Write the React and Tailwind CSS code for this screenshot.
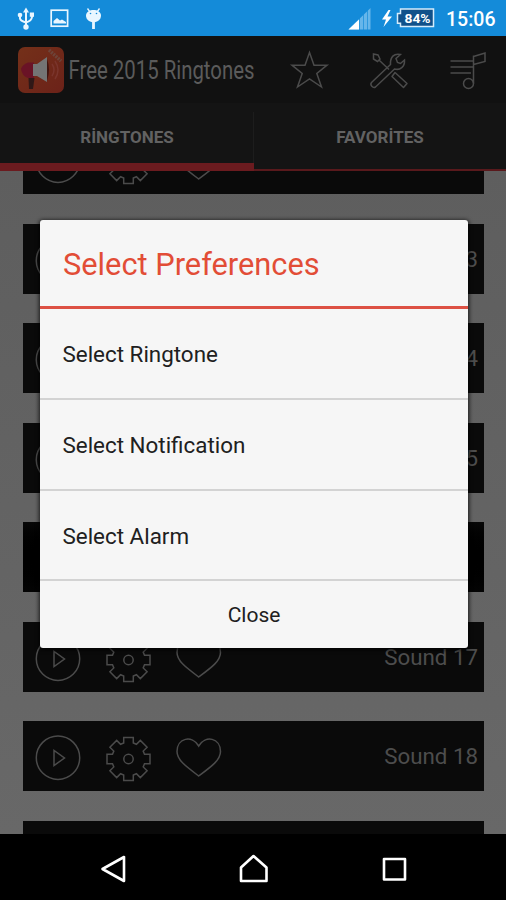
const sounds = [12, 13, 14, 15, 16, 17, 18, 19];
const unlabelled = [12, 19];
const options = ['Select Ringtone', 'Select Notification', 'Select Alarm'];

const StatusBar = () => (
  <div className="flex h-9 shrink-0 items-center bg-[#148bd9] text-white">
    <svg width="110" height="36" viewBox="0 0 110 36" fill="none" stroke="#e9f6ff">
      <path d="M26 11V27M20 15V18.5Q20.5 21 26 22.5Q31.5 21 32 17V14" strokeWidth="2" />
      <path d="M26 7.5L29 12.500H23Z" fill="#e9f6ff" stroke="none" />
      <circle cx="20" cy="15" r="2.300" fill="#e9f6ff" stroke="none" />
      <path d="M29.800 12.5H34V16.800H29.800Z" fill="#e9f6ff" stroke="none" />
      <circle cx="26" cy="27" r="2.700" fill="#e9f6ff" stroke="none" />
      <rect x="51.2" y="10.2" width="16.4" height="16" strokeWidth="1.7" />
      <path d="M53.5 23.5V21L57 18L60 20.5L62 19.500L66 22V23.5Z" fill="#e9f6ff" stroke="none" />
      <path d="M86 15.500C86 8 101 8 101 15.500C101 24.500 86 24.500 86 15.500Z" fill="#e9f6ff" stroke="none" />
      <path d="M87.500 8.500L90 12M99.500 8.500L97 12" strokeWidth="1.300" />
      <path d="M93.500 21V29" strokeWidth="2.800" />
      <circle cx="90.500" cy="13.500" r="0.800" fill="#148bd9" stroke="none" />
      <circle cx="96.500" cy="13.500" r="0.800" fill="#148bd9" stroke="none" />
    </svg>
    <svg className="ml-auto" width="98" height="36" viewBox="346 0 98 36">
      <path d="M348.500 29.500L370.500 8V29.500Z" fill="#66b6ea" />
      <path d="M348.500 29.500L359 19.500V29.500Z" fill="#fff" />
      <path d="M359.500 18V30M363.500 14V30M367.500 10V30" stroke="#148bd9" strokeWidth="0.700" />
      <path d="M388.500 10L382 19.500H386L383.500 27L392 16.500H387.500L390.500 10Z" fill="#fff" />
      <path d="M400.500 9H433.500V26.500H400.500V23.200H397.500V13.500H400.500Z" fill="#10518a" stroke="#d5ecfb" strokeWidth="1.500" />
      <text x="417.500" y="22.800" textAnchor="middle" fill="#fff" fontFamily="Roboto, sans-serif" fontWeight="700" fontSize="13.500" textLength="26" lengthAdjust="spacingAndGlyphs">84%</text>
    </svg>
    <span className="w-[62px] pl-[2px] pt-[3px] text-[19.5px] font-medium leading-none">15:06</span>
  </div>
);

const AppLogo = () => (
  <svg width="46" height="46" viewBox="0 0 46 46">
    <defs>
      <linearGradient id="logo" x1="0" y1="0" x2="1" y2="1">
        <stop offset="0" stopColor="#743019" />
        <stop offset="1" stopColor="#6c2219" />
      </linearGradient>
    </defs>
    <rect width="46" height="46" rx="7" fill="url(#logo)" />
    <path d="M3 22Q4 18 10 15.500H16V31H10Q4 29 3 22Z" fill="#6a1326" />
    <path d="M10.500 31H16.500L15 42H11Z" fill="#301817" />
    <path d="M15 17H19L29 10V35L19 29H15Z" fill="#747474" />
    <path d="M29 12Q33 22 29 34Z" fill="#401510" />
    <path d="M34 17Q38 22.500 34 29M37 14Q43 23 37 32" fill="none" stroke="#7a352c" strokeWidth="1.500" />
    <path d="M31 3L43 14" stroke="#6d4439" strokeWidth="3.500" strokeDasharray="2 1" />
  </svg>
);

const Toolbar = () => (
  <div className="flex h-[67px] shrink-0 items-center bg-[#111111] pl-[18px]">
    <AppLogo />
    <h1 className="w-[204px] shrink-0 pl-1">
      <svg className="overflow-visible" width="200" height="34" viewBox="0 0 200 34">
        <text x="0.500" y="26" fill="#5b5b5b" fontFamily="Roboto, sans-serif" fontSize="25.500" textLength="186" lengthAdjust="spacingAndGlyphs">Free 2015 Ringtones</text>
      </svg>
    </h1>
    <svg className="shrink-0" width="238" height="67" viewBox="268 36 238 67" fill="none" stroke="#4b4b4b" strokeWidth="1.500">
      <path d="M309.500 52.500L314 65.200H327L316.800 73.500L321.500 87L309.500 79L297.500 87L302.200 73.500L292 65.200H305Z" />
      <path d="M371.500 82.500L390.500 64.500C390 57 394 53 400.500 54.500L396 58.500L397.500 62.500L400.500 63.500L404.500 60C405 67 400 70.500 394.500 69L375.500 87C373 88.500 369.500 85 371.500 82.500Z" />
      <path d="M379.500 60.500L389 69.500M373.500 54L378 55L380 59L377.500 61.500L373.500 59Z" />
      <path d="M392 76.500L395 72.500L407 83.500L403.500 87.500Z" strokeLinejoin="round" />
      <path d="M450.500 61H473M450.500 67H473M450.500 73H471" />
      <circle cx="468.500" cy="83.500" r="5" />
      <path d="M473.500 83.500V55.500M473.500 56.500L485 53V61.500L473.500 64.500" />
    </svg>
  </div>
);

const Tabs = () => (
  <div className="flex h-[68px] shrink-0 bg-[#141414] text-[17px] font-bold leading-none text-[#626262]">
    <div className="flex w-[254px] items-center justify-center border-b-[8px] border-[#6b1b1f] pt-2">RİNGTONES</div>
    <div className="flex flex-1 items-center justify-center border-b-2 border-[#59191c] pt-[2px]">
      <span className="-ml-px h-[51px] w-px bg-[#1d1d1d]" />
      <span className="flex-1 text-center">FAVORİTES</span>
    </div>
  </div>
);

// eight square teeth round the hub
const toothPoints = [[-4.8, -16], [-4.8, -21.5], [4.8, -21.5], [4.8, -16]];

const gearPoints = [0, 45, 90, 135, 180, 225, 270, 315]
  .flatMap((deg) => {
    const a = (deg * Math.PI) / 180;
    return toothPoints.map(([x, y]) => {
      const px = x * Math.cos(a) - y * Math.sin(a);
      const py = x * Math.sin(a) + y * Math.cos(a);
      return `${px.toFixed(2)},${py.toFixed(2)}`;
    });
  })
  .join(' ');

const RowIcons = () => (
  <svg width="210" height="70" viewBox="0 0 210 70" fill="none" stroke="#4b4b4b" strokeWidth="1.5">
    <circle cx="35" cy="36.700" r="21.700" />
    <path d="M31 29.500V44.500L41.500 37Z" />
    <g transform="translate(105.500 38)">
      <polygon points={gearPoints} />
      <circle r="4.700" />
    </g>
    <path d="M175.700 55C163 45.500 154 39 154 30.500C154 17 169 13.500 175.700 25C182.500 13.500 197.500 17 197.500 30.500C197.500 39 188.500 45.500 175.700 55Z" />
  </svg>
);

const SoundRow = ({ number }) => {
  if (number === 16) {
    return <div className="h-[70px] shrink-0 bg-linear-to-b from-[#080808] via-black to-[#040404]" />;
  }
  return (
    <div className="flex h-[70px] shrink-0 items-center bg-[#0a0a0a] pr-[6px] text-[22.3px] leading-none text-[#4d4d4d]">
      <RowIcons />
      {!unlabelled.includes(number) && <span className="ml-auto pt-px">Sound {number}</span>}
    </div>
  );
};

const PreferencesDialog = () => (
  <div className="absolute left-[40px] top-[220px] flex h-[428px] w-[428px] flex-col rounded-[3px] bg-[#f6f6f6] text-[22.4px] leading-none text-[#202020] shadow-[0_1px_4px_1px_rgba(0,0,0,0.75)]">
    <h2 className="flex h-[89px] shrink-0 items-center border-b-[3px] border-[#dd5144] pl-[23px] pt-[5px] text-[30.8px] text-[#e24d36]">
      Select Preferences
    </h2>
    {options.map((option) => (
      <button key={option} className="flex h-[90.8px] shrink-0 items-center border-b-2 border-[#d3d3d3] pl-[22.5px] pt-[2px]">
        {option}
      </button>
    ))}
    <button className="flex-1 pt-[2px] text-[21px]">Close</button>
  </div>
);

const NavBar = () => (
  <div className="h-[66px] shrink-0 bg-black">
    <svg width="506" height="66" viewBox="0 834 506 66" fill="none" stroke="#fff" strokeWidth="2.600" strokeLinejoin="round">
      <path d="M102.500 869L124 857V881Z" />
      <path d="M241 881V867.500L253.500 856L266.500 867.500V881Z" />
      <rect x="384" y="859" width="21" height="20.500" />
    </svg>
  </div>
);

export default function App() {
  return (
    <div className="relative flex h-[900px] w-[506px] flex-col overflow-hidden bg-black font-['Roboto',sans-serif]">
      <StatusBar />
      <Toolbar />
      <Tabs />
      <main className="min-h-0 flex-1 overflow-hidden bg-linear-to-b from-[#5e5e5e] to-[#686868] pl-[23px] pr-[22px]">
        <div className="-mt-[47px] flex flex-col gap-[29.5px]">
          {sounds.map((number) => (
            <SoundRow key={number} number={number} />
          ))}
        </div>
      </main>
      <NavBar />
      <PreferencesDialog />
    </div>
  );
}
